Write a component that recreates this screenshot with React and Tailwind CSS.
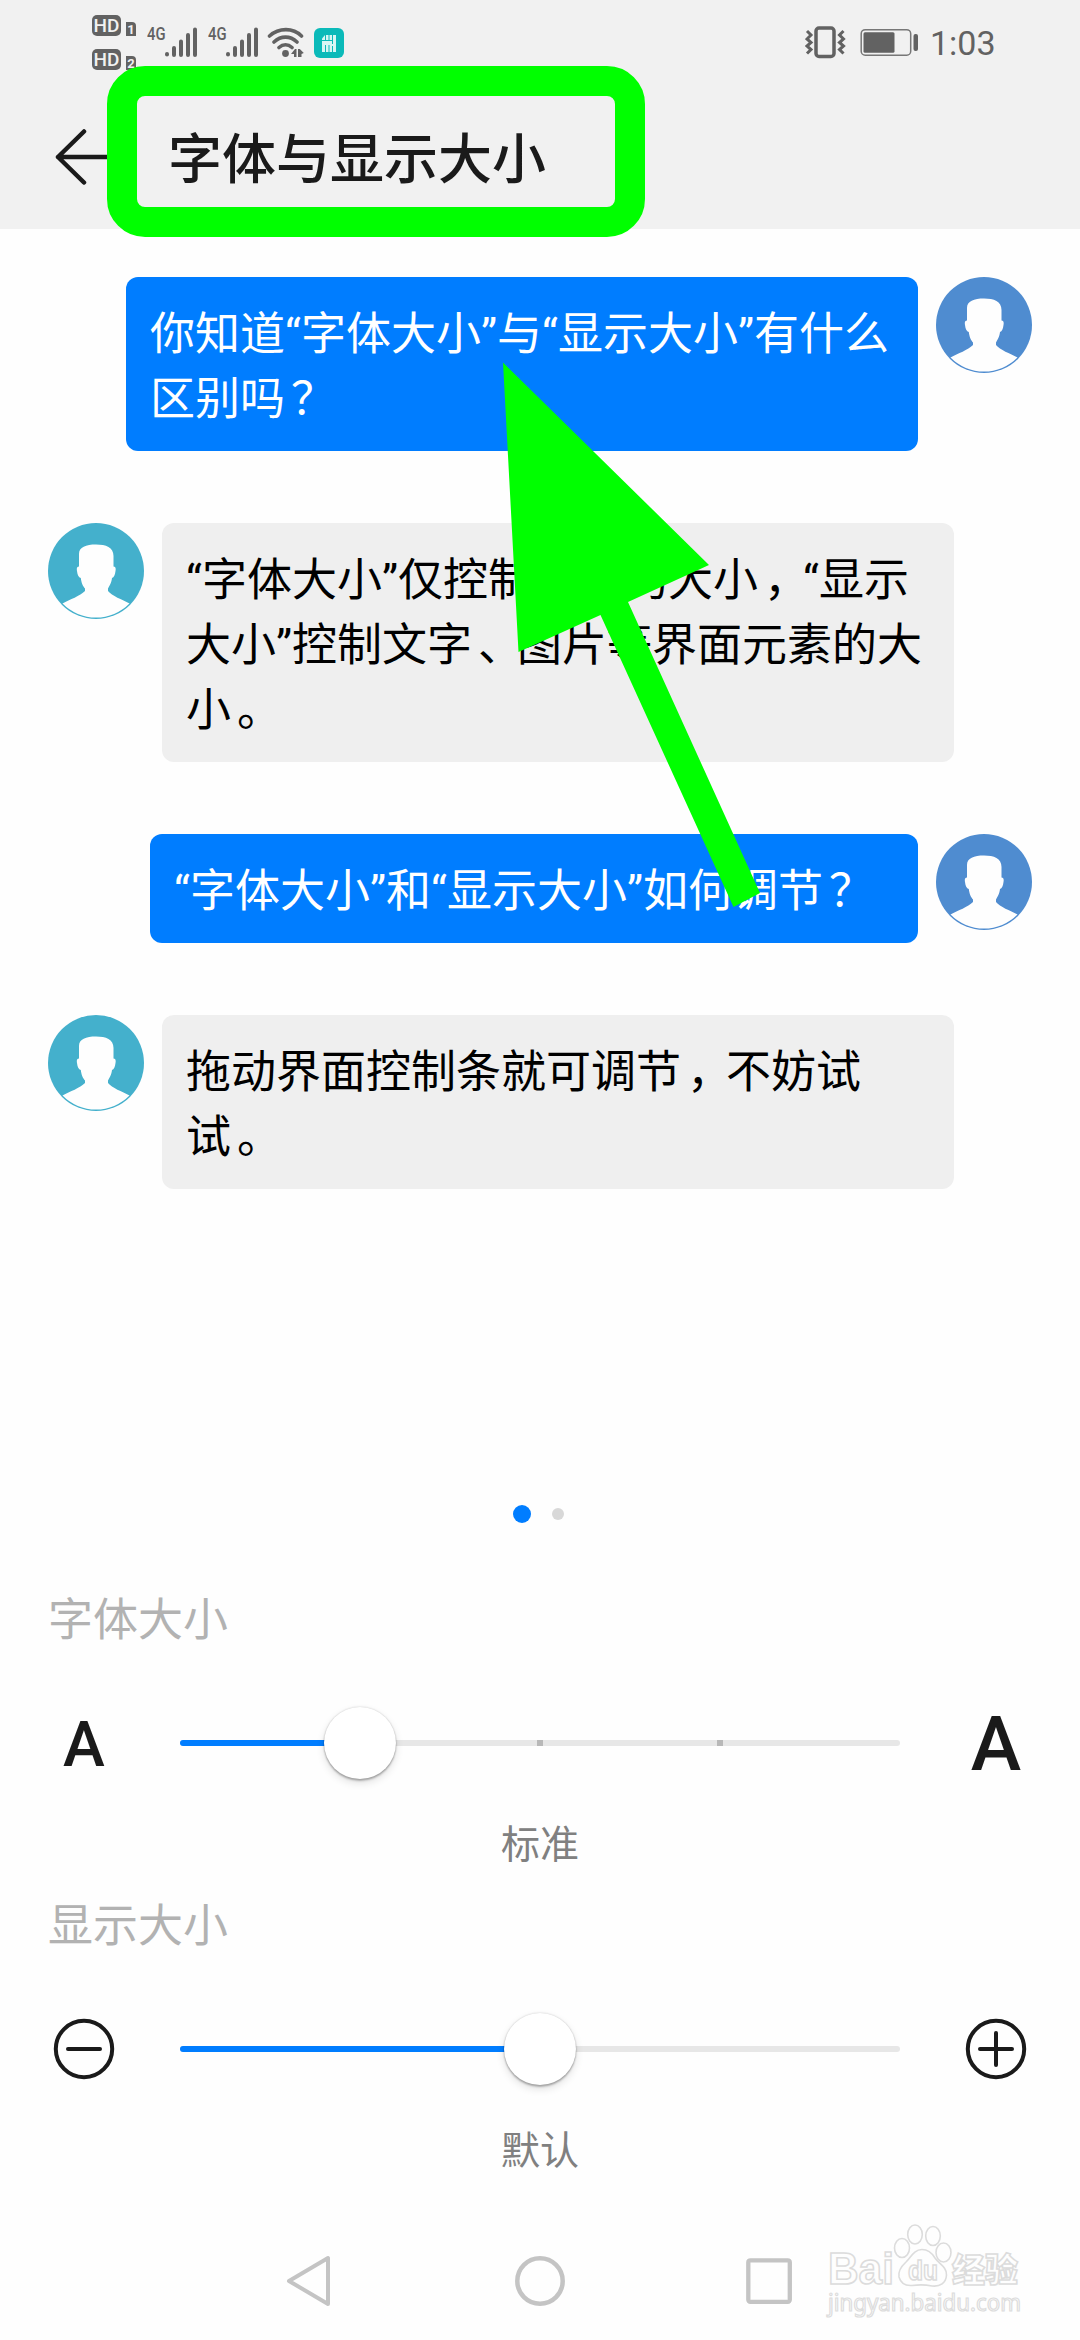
import React from "react";

function HdBadge({ n }) {
  return (
    <div className="flex h-[21px] items-end gap-[5px]">
      <span className="flex h-[21px] w-[29px] items-center justify-center rounded-[5px] bg-[#626262] font-['Roboto',sans-serif] text-[19px] leading-none font-medium text-[#f1f1f1]">
        HD
      </span>
      <span className="flex h-[14px] w-[10px] items-center justify-center rounded-tr-[4px] bg-[#626262] font-['Roboto',sans-serif] text-[13px] leading-none font-bold text-[#f1f1f1]">
        {n}
      </span>
    </div>
  );
}

function Signal() {
  return (
    <div className="flex h-[31px] w-[50px] items-start">
      <span className="w-[18px] font-['Roboto',sans-serif] text-[19px] leading-[14px] font-medium text-[#626262]">
        <span className="inline-block origin-left scale-x-[0.78]">4G</span>
      </span>
      <svg width="32" height="31" viewBox="0 0 32 31" className="shrink-0" stroke="#626262" strokeWidth="4" strokeLinecap="round">
        <path d="M2 27v.5M9 21v7M16 14.500v13.500M23 8v20M30 2.500v25.500" />
      </svg>
    </div>
  );
}

function StatusBar() {
  return (
    <div className="flex h-[84px] items-start justify-between pr-[88px] pl-[92px]">
      <div className="flex">
        <div className="mt-[15px] flex flex-col gap-[13px]">
          <HdBadge n="1" />
          <HdBadge n="2" />
        </div>
        <div className="mt-[27px] ml-[11px] flex gap-[11px]">
          <Signal />
          <Signal />
        </div>
        <svg width="40" height="34" viewBox="0 0 40 34" className="mt-[26px] ml-[9px]" fill="none" stroke="#626262" strokeWidth="3.600" strokeLinecap="round">
          <path d="M2.500 10C12 1.500 26 1.500 34.500 10M7 16C14 9.500 23 9.500 30 16M12 21.500C16 18 21 18 25 21.500" />
          <circle cx="18.500" cy="27.500" r="3.400" fill="#626262" stroke="none" />
          <path d="M24 28l4-5h1.500v8H27v-3zM31 23h1.800l4 4-2.300 1v3H31z" fill="#626262" stroke="none" />
        </svg>
        <svg width="30" height="30" viewBox="0 0 30 30" className="mt-[28px] ml-[7px]">
          <rect width="30" height="30" rx="6" fill="#0bbab9" />
          <path d="M11 7h11v17H8V10.500z" fill="#d9f6f4" />
          <path d="M11.500 7v5M15 7v5M18.500 7v9M8 12.500h10.500M11.500 17v7M15 17v7M18.500 18v6" stroke="#0bbab9" strokeWidth="1" />
        </svg>
      </div>
      <div className="flex items-center pt-[26px]">
        <svg width="42" height="34" viewBox="0 0 42 34" fill="none" stroke="#626262" strokeWidth="3">
          <rect x="11" y="2" width="18" height="28.500" rx="3" strokeWidth="3.500" />
          <path d="M2 5l4 4-4 4 4 3.500-4 3.500 4 3.500-4 4M38.500 5l-4 4 4 4-4 3.500 4 3.500-4 3.500 4 4" />
        </svg>
        <svg width="60" height="34" viewBox="0 0 60 34" className="ml-[13px]">
          <rect x="1.200" y="3.700" width="49.500" height="25.500" rx="4" fill="none" stroke="#777777" strokeWidth="1.500" />
          <rect x="3.500" y="6.200" width="31" height="20.500" rx="1.500" fill="#626262" />
          <rect x="53.500" y="8" width="4.500" height="17" rx="2" fill="#626262" />
        </svg>
        <span className="ml-[10px] w-[62px] font-['Roboto',sans-serif] text-[34px] leading-[34px] font-normal text-[#626262]">
          1:03
        </span>
      </div>
    </div>
  );
}

function Avatar({ color }) {
  return (
    <svg width="96" height="96" viewBox="0 0 96 96" className="shrink-0">
      <circle cx="48" cy="48" r="48" fill={color} />
      <path
        d="M31 31C31 24 38 21.500 48 21.500S65.500 24 65.500 33V43.500C67.500 43.500 68 45 67.500 48C67 52 66 54.500 64 55C63.500 60 61.500 62.500 60 65.500V68C64 73 74 76.500 81.500 80.500A47 47 0 0 1 14.500 80.500C22 76.500 32 73 37 68V65.500C34.500 62.500 33.500 60 32.800 55C30.500 54.500 29.500 52 29 48C28.500 45 29 43.500 31 43.500Z"
        fill="#fefefe"
      />
    </svg>
  );
}

function Mark({ children }) {
  return <span className="inline-block translate-x-[6px]">{children}</span>;
}

function Message({ mine, width, children }) {
  return (
    <div className={mine ? "flex flex-row-reverse gap-[18px]" : "flex gap-[18px]"}>
      <Avatar color={mine ? "#4f8cd0" : "#44b0cc"} />
      <div
        className={
          (mine ? "bg-[#007dff] text-white " : "bg-[#efefef] text-black ") +
          width +
          " rounded-[12px] px-[24px] pt-[25px] pb-[19px] text-[45px] leading-[65px] whitespace-nowrap"
        }
      >
        {children}
      </div>
    </div>
  );
}

function Slider({ left, right, fill, thumb, ticks }) {
  return (
    <div className="flex h-[74px] items-center justify-between px-[48px]">
      <div className="flex w-[72px] justify-center">{left}</div>
      <div className="relative h-[6px] w-[720px] rounded-full bg-[#e7e7e7]">
        <div className={"h-full rounded-full bg-[#007dff] " + fill} />
        {ticks && (
          <>
            <div className="absolute top-0 left-[357px] h-[6px] w-[6px] bg-[#b8b8b8]" />
            <div className="absolute top-0 left-[537px] h-[6px] w-[6px] bg-[#b8b8b8]" />
          </>
        )}
        <div
          className={
            "absolute -top-[33px] size-[72px] rounded-full bg-white shadow-[0_2px_2px_rgba(0,0,0,0.25),0_4px_8px_rgba(0,0,0,0.12),0_0_2px_rgba(0,0,0,0.2)] " + thumb
          }
        />
      </div>
      <div className="flex w-[72px] justify-center">{right}</div>
    </div>
  );
}

function RoundIcon({ plus }) {
  return (
    <svg width="62" height="62" viewBox="0 0 62 62" fill="none" stroke="#1a1a1a" strokeWidth="4" strokeLinecap="round">
      <circle cx="31" cy="31" r="28.200" />
      <path d="M15 31h32" />
      {plus && <path d="M31 15v32" />}
    </svg>
  );
}

function Watermark() {
  return (
    <svg width="220" height="124" viewBox="0 0 220 124" className="absolute top-[2214px] left-[820px]" fill="#fefefe" stroke="#dcdcdc" strokeWidth="1.600">
      <text x="8" y="70" fontFamily="Liberation Sans" fontWeight="700" fontSize="44" textLength="66" lengthAdjust="spacingAndGlyphs">Bai</text>
      <ellipse cx="82" cy="34" rx="7.500" ry="9.500" />
      <ellipse cx="95" cy="20.500" rx="7.300" ry="9.500" />
      <ellipse cx="113" cy="22" rx="7.300" ry="9.500" />
      <ellipse cx="123.500" cy="38.500" rx="7.500" ry="9.500" />
      <path d="M102 35.500C94 35.500 91 43 86 48C80 53.500 78 58 79 63C81 70 86 72 92 71.500C99 70.500 105 70.500 112 72C120 73 126 69 126.500 61C127 53 119 50 115 44C112 39 108 35.500 102 35.500Z" />
      <text x="88" y="66" fontFamily="Liberation Sans" fontWeight="700" fontSize="28" textLength="30" lengthAdjust="spacingAndGlyphs">du</text>
      <text x="132" y="68" fontFamily="Noto Sans CJK SC" fontWeight="900" fontSize="33">经验</text>
      <text x="8" y="97" fontFamily="Noto Sans" fontWeight="400" fontSize="23" strokeWidth="1.200" textLength="193" lengthAdjust="spacingAndGlyphs">jingyan.baidu.com</text>
    </svg>
  );
}

export default function App() {
  return (
    <div className="relative flex h-[2340px] w-[1080px] flex-col overflow-hidden bg-[#fefefe] font-['Roboto','Noto_Sans_CJK_SC',sans-serif]">
      <header className="h-[229px] bg-[#f1f1f1]">
        <StatusBar />
        <div className="flex h-[145px] items-center pl-[54px]">
          <svg width="60" height="56" viewBox="0 0 60 56" fill="none" stroke="#1a1a1a" strokeWidth="4.500" strokeLinecap="round" strokeLinejoin="round">
            <path d="M30 2.500L4 28l26 25.500M4 28h54" />
          </svg>
          <h1 className="ml-[54px] pt-[9px] text-[54px] leading-[80px] font-medium text-[#1a1a1a]">字体与显示大小</h1>
        </div>
      </header>

      <main className="flex h-[1276px] flex-col gap-[72px] px-[48px] pt-[48px]">
        <Message mine width="w-[792px]">
          你知道“字体大小”与“显示大小”有什么
          <br />
          区别吗<Mark>？</Mark>
        </Message>
        <Message width="w-[792px]">
          “字体大小”仅控制文字的大小<Mark>，</Mark>“显示
          <br />
          大小”控制文字<Mark>、</Mark>图片等界面元素的大
          <br />
          小<Mark>。</Mark>
        </Message>
        <Message mine width="w-[768px]">
          “字体大小”和“显示大小”如何调节<Mark>？</Mark>
        </Message>
        <Message width="w-[792px]">
          拖动界面控制条就可调节<Mark>，</Mark>不妨试
          <br />
          试<Mark>。</Mark>
        </Message>
      </main>

      <div className="flex h-[18px] items-center justify-center gap-[21px]">
        <span className="size-[18px] rounded-full bg-[#007dff]" />
        <span className="mr-[3px] size-[12px] rounded-full bg-[#d8d8d8]" />
      </div>

      <section className="mt-[62px] h-[306px]">
        <h2 className="pt-[3px] pl-[48px] text-[45px] leading-[66px] text-[#b2b2b2]">字体大小</h2>
        <div className="mt-[52px]">
          <Slider
            left={<span className="pt-[3px] font-['Roboto',sans-serif] text-[63px] leading-none font-medium text-[#1a1a1a]">A</span>}
            right={<span className="pt-[2px] font-['Roboto',sans-serif] text-[76px] leading-none font-medium text-[#1a1a1a]">A</span>}
            fill="w-[180px]"
            thumb="left-[144px]"
            ticks
          />
        </div>
        <p className="mt-[36px] text-center text-[39px] leading-[58px] text-[#808080]">标准</p>
      </section>

      <section className="h-[306px]">
        <h2 className="pt-[3px] pl-[48px] text-[45px] leading-[66px] text-[#b2b2b2]">显示大小</h2>
        <div className="mt-[52px]">
          <Slider left={<RoundIcon />} right={<RoundIcon plus />} fill="w-[360px]" thumb="left-[324px]" />
        </div>
        <p className="mt-[36px] text-center text-[39px] leading-[58px] text-[#808080]">默认</p>
      </section>

      <nav className="mt-[57px] flex items-center justify-between pr-[286px] pl-[285px]">
        <svg width="50" height="54" viewBox="0 0 50 54" fill="none" stroke="#c4c4c4" strokeWidth="4" strokeLinejoin="round">
          <path d="M4 27L43 4v46z" />
        </svg>
        <svg width="54" height="54" viewBox="0 0 54 54" fill="none" stroke="#c4c4c4" strokeWidth="4.500">
          <circle cx="27" cy="27" r="22.700" />
        </svg>
        <svg width="50" height="54" viewBox="0 0 50 54" fill="none" stroke="#c4c4c4" strokeWidth="4.300">
          <rect x="4.300" y="6.300" width="41.500" height="41.500" rx="2" />
        </svg>
      </nav>

      <div className="absolute top-[66px] left-[107px] h-[171px] w-[538px] rounded-[38px] border-[30px] border-[#00ff00]" />
      <svg width="280" height="560" viewBox="0 0 280 560" className="absolute top-[360px] left-[490px]">
        <path d="M13 2.500L219 205L138 242L270 533L243.500 547L110.500 255L28.500 292Z" fill="#00ff00" />
      </svg>
      <Watermark />
    </div>
  );
}
